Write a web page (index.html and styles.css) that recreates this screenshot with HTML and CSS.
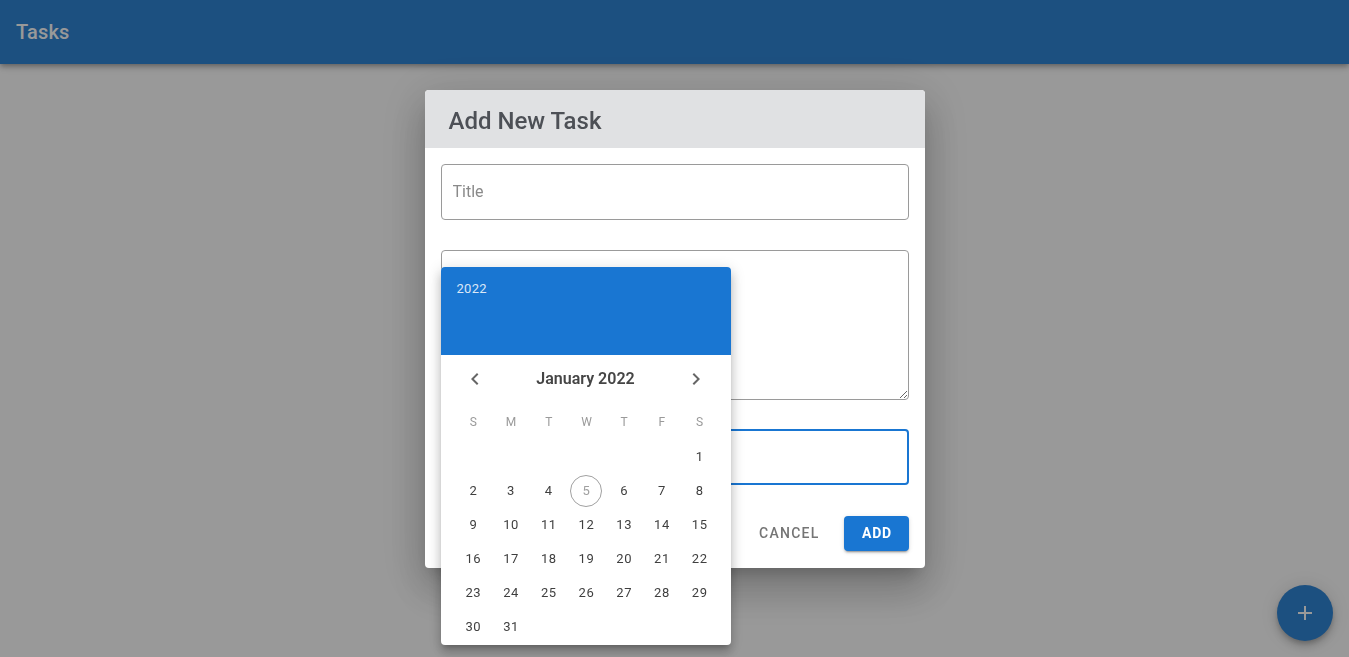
FILE: index.html
```html
<!DOCTYPE html>
<html lang="en">
<head>
<meta charset="utf-8">
<title>Tasks</title>
<link rel="stylesheet" href="styles.css">
</head>
<body>
<header class="appbar"><h1 class="appbar-title">Tasks</h1></header>
<main class="page"></main>
<button class="fab" aria-label="Add task">
  <svg viewBox="0 0 24 24" width="24" height="24"><path d="M19 13h-6v6h-2v-6H5v-2h6V5h2v6h6v2z" fill="#fff"/></svg>
</button>
<div class="backdrop">
  <div class="dialog">
    <div class="dialog-head"><h2 class="dialog-title">Add New Task</h2></div>
    <div class="dialog-body">
      <div class="field"><input class="input" type="text" placeholder="Title"></div>
      <div class="field field-gap"><textarea class="textarea"></textarea></div>
      <div class="field field-gap date-field">
        <input class="input input-focused" type="text">
        <div class="picker">
          <div class="picker-head"><span class="picker-year">2022</span></div>
          <div class="picker-nav">
            <span class="nav-btn"><svg viewBox="0 0 24 24" width="24" height="24"><path d="M15.41 7.41 14 6l-6 6 6 6 1.41-1.41L10.83 12z" fill="#666"/></svg></span>
            <span class="picker-month">January 2022</span>
            <span class="nav-btn"><svg viewBox="0 0 24 24" width="24" height="24"><path d="M10 6 8.59 7.41 13.17 12l-4.58 4.59L10 18l6-6z" fill="#666"/></svg></span>
          </div>
          <div class="weekdays">
            <span>S</span><span>M</span><span>T</span><span>W</span><span>T</span><span>F</span><span>S</span>
          </div>
          <div class="days">
            <span></span><span></span><span></span><span></span><span></span><span></span><span class="day">1</span>
            <span class="day">2</span><span class="day">3</span><span class="day">4</span><span class="day"><span class="today">5</span></span><span class="day">6</span><span class="day">7</span><span class="day">8</span>
            <span class="day">9</span><span class="day">10</span><span class="day">11</span><span class="day">12</span><span class="day">13</span><span class="day">14</span><span class="day">15</span>
            <span class="day">16</span><span class="day">17</span><span class="day">18</span><span class="day">19</span><span class="day">20</span><span class="day">21</span><span class="day">22</span>
            <span class="day">23</span><span class="day">24</span><span class="day">25</span><span class="day">26</span><span class="day">27</span><span class="day">28</span><span class="day">29</span>
            <span class="day">30</span><span class="day">31</span>
          </div>
        </div>
      </div>
      <div class="actions">
        <button class="btn btn-text">Cancel</button>
        <button class="btn btn-primary">Add</button>
      </div>
    </div>
  </div>
</div>
</body>
</html>
```
FILE: styles.css
```css
* { box-sizing: border-box; }
html, body { margin: 0; height: 100%; }
body {
  font-family: Roboto, "Noto Sans", "Liberation Sans", sans-serif;
  background: #fff;
  overflow: hidden;
}
.appbar {
  height: 64px;
  background: #3085d5;
  display: flex;
  align-items: center;
  padding: 0 16px;
  box-shadow: 0 2px 4px -1px rgba(0,0,0,0.2), 0 4px 5px 0 rgba(0,0,0,0.14), 0 1px 10px 0 rgba(0,0,0,0.12);
}
.appbar-title {
  margin: 0;
  color: #fff;
  font-size: 20px;
  font-weight: 500;
  letter-spacing: 0.15px;
}
.page { height: calc(100% - 64px); }
.fab {
  position: fixed;
  right: 16px;
  bottom: 16px;
  width: 56px;
  height: 56px;
  border: 0;
  border-radius: 50%;
  background: #3085d5;
  display: flex;
  align-items: center;
  justify-content: center;
  padding: 0;
  box-shadow: 0 3px 5px -1px rgba(0,0,0,0.2), 0 6px 10px 0 rgba(0,0,0,0.14), 0 1px 18px 0 rgba(0,0,0,0.12);
}
.backdrop {
  position: fixed;
  inset: 0;
  background: rgba(0,0,0,0.4);
  display: flex;
  align-items: center;
  justify-content: center;
}
.dialog {
  width: 500px;
  background: #fff;
  border-radius: 4px;
  box-shadow: 0 11px 15px -7px rgba(0,0,0,0.2), 0 24px 38px 3px rgba(0,0,0,0.14), 0 9px 46px 8px rgba(0,0,0,0.12);
}
.dialog-head {
  height: 58px;
  background: #e0e1e3;
  border-radius: 4px 4px 0 0;
  display: flex;
  align-items: center;
  padding: 0 24px;
}
.dialog-title {
  margin: 0;
  font-size: 24px;
  font-weight: 500;
  color: #4d5056;
  position: relative;
  top: 2px;
}
.dialog-body {
  padding: 16px 16px 17px;
}
.field { position: relative; }
.field-gap { margin-top: 30px; }
.date-field { margin-top: 29px; }
.input {
  display: block;
  width: 100%;
  height: 56px;
  border: 1px solid #9a9a9a;
  border-radius: 4px;
  padding: 0 11px;
  font: 16px Roboto, "Noto Sans", sans-serif;
  color: #333;
  outline: none;
}
.input::placeholder { color: #8a8a8a; }
.input-focused { border: 2px solid #1976d2; }
.textarea {
  display: block;
  width: 100%;
  height: 150px;
  border: 1px solid #9a9a9a;
  border-radius: 4px;
  padding: 11px;
  font: 16px Roboto, "Noto Sans", sans-serif;
  resize: vertical;
  outline: none;
}
.actions {
  display: flex;
  justify-content: flex-end;
  align-items: center;
  margin-top: 31px;
}
.btn {
  height: 35px;
  border: 0;
  border-radius: 4px;
  font: 500 14px Roboto, "Noto Sans", sans-serif;
  letter-spacing: 1.25px;
  text-transform: uppercase;
  cursor: pointer;
}
.btn-text {
  background: transparent;
  color: #757575;
  padding: 0 8px;
  margin-right: 16px;
}
.btn-primary {
  width: 65px;
  background: #1976d2;
  color: #fff;
  font-weight: 700;
  letter-spacing: 0.8px;
  padding: 0 0 0 2px;
  box-shadow: 0 3px 1px -2px rgba(0,0,0,0.2), 0 2px 2px 0 rgba(0,0,0,0.14), 0 1px 5px 0 rgba(0,0,0,0.12);
}
/* date picker popover */
.picker {
  position: absolute;
  left: 0;
  top: -162px;
  width: 290px;
  height: 378px;
  background: #fff;
  border-radius: 4px;
  overflow: hidden;
  box-shadow: 0 5px 5px -3px rgba(0,0,0,0.2), 0 8px 10px 1px rgba(0,0,0,0.14), 0 3px 14px 2px rgba(0,0,0,0.12);
  z-index: 2;
}
.picker-head {
  height: 88px;
  background: #1976d2;
  padding: 14px 16px;
}
.picker-year {
  display: block;
  color: rgba(255,255,255,0.85);
  font-size: 13px;
  line-height: 16px;
  letter-spacing: 0.3px;
}
.picker-nav {
  margin-top: 4px;
  height: 40px;
  padding: 0 14px;
  display: flex;
  align-items: center;
  justify-content: space-between;
}
.nav-btn {
  width: 40px;
  height: 40px;
  display: flex;
  align-items: center;
  justify-content: center;
}
.picker-month {
  font-size: 16px;
  font-weight: 600;
  color: #454545;
}
.weekdays, .days {
  display: grid;
  grid-template-columns: repeat(7, 1fr);
  padding: 0 12px 0 14px;
}
.weekdays {
  margin-top: 13px;
  height: 20px;
}
.weekdays span {
  text-align: center;
  font-size: 12px;
  line-height: 20px;
  color: #9a9a9a;
}
.days { margin-top: 8px; }
.days > span {
  height: 34px;
  display: flex;
  align-items: center;
  justify-content: center;
  font-size: 13px;
  color: #3f3f3f;
  letter-spacing: 0.6px;
}
.today {
  width: 32px;
  height: 32px;
  border: 1px solid #a0a0a0;
  border-radius: 50%;
  display: flex;
  align-items: center;
  justify-content: center;
  color: #a0a0a0;
}
```
